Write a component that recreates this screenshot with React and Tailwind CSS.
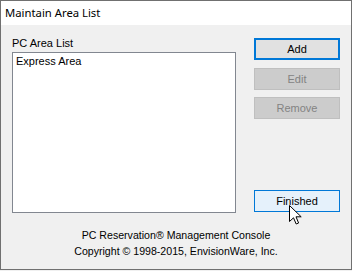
import React from 'react';

const Button = ({ children, variant = 'normal', className = '' }) => {
  const styles = {
    default: 'border-2 border-[#0078d7] bg-[#e1e1e1] text-black',
    disabled: 'border border-[#bfbfbf] bg-[#cccccc] text-[#838383]',
    hover: 'border border-[#0078d7] bg-[#e5f1fb] text-black',
  };
  return (
    <div className={`flex h-[22px] w-[86px] items-center justify-center text-[11px] ${styles[variant]} ${className}`}>
      {children}
    </div>
  );
};

const Cursor = () => (
  <svg className="absolute left-[289px] top-[205px]" width="13" height="20" viewBox="0 0 13 20">
    <path
      d="M0.5 0.5 V16.5 L4.5 12.8 L7.2 19 L9.6 18 L7 11.8 H12.2 Z"
      fill="#fff"
      stroke="#000"
      strokeWidth="1"
      strokeLinejoin="miter"
    />
  </svg>
);

export default function App() {
  return (
    <div className="relative h-[271px] w-[352px] bg-[#f0f0f0]" style={{ fontFamily: '"Liberation Sans", Arial, sans-serif' }}>
      <div className="flex h-[270px] w-[352px] flex-col border border-[#707070] bg-[#f0f0f0]">
        <div className="flex h-[24px] items-center bg-white pl-[4px] text-[11.3px] text-black" style={{ fontFamily: '"Noto Sans", sans-serif' }}>
          Maintain Area List
        </div>

        <div className="flex flex-1 flex-col px-[11px] pt-[12px]">
          <div className="flex gap-[18px]">
            <div className="flex w-[224px] flex-col">
              <div className="h-[13px] text-[11px] leading-[13px] text-black">PC Area List</div>
              <div className="mt-[2px] h-[161px] border border-[#828790] bg-white px-[3px] pt-[2px] text-[11px] leading-[13px] text-black">
                Express Area
              </div>
            </div>
            <div className="mb-[1px] mt-[1px] flex flex-col">
              <Button variant="default">Add</Button>
              <Button variant="disabled" className="mt-[8px]">Edit</Button>
              <Button variant="disabled" className="mt-[7px]">Remove</Button>
              <Button variant="hover" className="mt-auto">Finished</Button>
            </div>
          </div>

          <div className="mt-[14px] flex flex-col items-center text-[10.6px] leading-[16px] text-black">
            <div>PC Reservation® Management Console</div>
            <div>Copyright © 1998-2015, EnvisionWare, Inc.</div>
          </div>
        </div>
      </div>
      <Cursor />
    </div>
  );
}
